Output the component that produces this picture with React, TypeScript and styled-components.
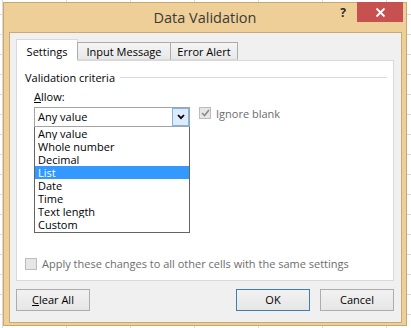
import React from 'react';
import styled, { createGlobalStyle } from 'styled-components';

const Global = createGlobalStyle`
  html, body { margin: 0; padding: 0; }
  body {
    width: 411px;
    height: 328px;
    overflow: hidden;
    background-color: #ffffff;
    background-image:
      linear-gradient(#dadada 1px, transparent 1px),
      linear-gradient(90deg, #dadada 1px, transparent 1px);
    background-size: 64px 20px;
    background-position: 0 14px, 2px 0;
    font-family: "Open Sans", "Noto Sans", sans-serif;
    font-size: 11px;
    color: #000;
  }
  #root { display: flex; }
`;

const Window = styled.div`
  box-sizing: border-box;
  margin: 2px 0 0 3px;
  width: 404px;
  height: 324px;
  background: #efcf98;
  border: 1px solid #c9a86f;
  display: flex;
  flex-direction: column;
`;

const TitleBar = styled.div`
  height: 29px;
  display: grid;
  grid-template-columns: 1fr auto 1fr;
  align-items: start;
`;

const Title = styled.div`
  grid-column: 2;
  font-size: 14.5px;
  line-height: 29px;
  color: #3a3a3a;
  white-space: nowrap;
`;

const Controls = styled.div`
  grid-column: 3;
  justify-self: end;
  display: flex;
  margin-right: 3px;
`;

const HelpButton = styled.div`
  width: 24px;
  height: 20px;
  margin-right: 2px;
  font-weight: 700;
  font-size: 12px;
  line-height: 19px;
  text-align: center;
  color: #2b2b2b;
`;

const CloseButton = styled.div`
  width: 46px;
  height: 20px;
  margin-top: -1px;
  background: #c75050;
  display: flex;
  align-items: center;
  justify-content: center;
`;

const Client = styled.div`
  box-sizing: border-box;
  flex: 1;
  margin: 0 4px 2px 5px;
  border: 1px solid #c7aa78;
  background: #f0f0f0;
  padding: 6px 7px 0 6px;
  display: flex;
  flex-direction: column;
`;

const TabStrip = styled.div`
  display: flex;
  align-items: flex-start;
  height: 22px;
  margin-bottom: -1px;
  position: relative;
  z-index: 1;
`;

const Tab = styled.div<{ $active?: boolean; $w: number }>`
  box-sizing: border-box;
  width: ${p => p.$w}px;
  height: ${p => (p.$active ? 22 : 18)}px;
  margin-top: ${p => (p.$active ? 0 : 3)}px;
  margin-left: ${p => (p.$active ? 0 : -1)}px;
  border: 1px solid ${p => (p.$active ? '#d9d9d9' : '#acacac')};
  border-bottom: ${p => (p.$active ? 'none' : '1px solid #d9d9d9')};
  background: ${p => (p.$active ? '#ffffff' : 'linear-gradient(#f5f5f5, #e8e8e8)')};
  text-align: center;
  line-height: ${p => (p.$active ? 24 : 18)}px;
  white-space: nowrap;
  &:first-child { margin-left: 0; }
`;

const Panel = styled.div`
  box-sizing: border-box;
  height: 221px;
  border: 1px solid #d9d9d9;
  background: #ffffff;
  position: relative;
  padding: 8px 0 0 8px;
  display: flex;
  flex-direction: column;
`;

const GroupHeader = styled.div`
  display: flex;
  align-items: center;
  height: 16px;
  padding-right: 6px;
  gap: 5px;
`;

const GroupRule = styled.div`
  flex: 1;
  height: 1px;
  background: #dcdcdc;
  margin-top: 1px;
`;

const Criteria = styled.div`
  display: flex;
  flex-direction: column;
  padding-left: 9px;
  margin-top: 4px;
`;

const FieldLabel = styled.div`
  height: 16px;
  line-height: 16px;
`;

const U = styled.span`
  text-decoration: underline;
  text-underline-offset: 1px;
`;

const FieldRow = styled.div`
  display: flex;
  align-items: flex-start;
  margin-top: 2px;
  gap: 9px;
`;

const ComboWrap = styled.div`
  position: relative;
  width: 156px;
`;

const Combo = styled.div`
  box-sizing: border-box;
  height: 20px;
  border: 1px solid #a3a3a3;
  display: flex;
  align-items: center;
  padding-left: 3px;
  background: #fff;
`;

const ComboText = styled.div`
  flex: 1;
  line-height: 18px;
`;

const ComboArrow = styled.div`
  box-sizing: border-box;
  width: 17px;
  height: 18px;
  background: #dcecfc;
  border: 1px solid #7eb4ea;
  display: flex;
  align-items: center;
  justify-content: center;
`;

const ListBox = styled.div`
  position: absolute;
  left: 0;
  top: 20px;
  box-sizing: border-box;
  width: 156px;
  border: 1px solid #646464;
  border-top: none;
  background: #fff;
  display: flex;
  flex-direction: column;
  padding-bottom: 1px;
`;

const ListItem = styled.div<{ $sel?: boolean }>`
  height: 13px;
  line-height: 13px;
  padding-left: 3px;
  overflow: hidden;
  background: ${p => (p.$sel ? '#3399ff' : 'transparent')};
  color: ${p => (p.$sel ? '#fff' : '#000')};
  white-space: nowrap;
`;

const CheckRow = styled.label<{ $disabled?: boolean }>`
  display: flex;
  align-items: center;
  gap: 5px;
  color: ${p => (p.$disabled ? '#6d6d6d' : '#000')};
  white-space: nowrap;
`;

const CheckBox = styled.div`
  box-sizing: border-box;
  width: 12px;
  height: 12px;
  border: 1px solid #bcbcbc;
  background: #e6e6e6;
  display: flex;
  align-items: center;
  justify-content: center;
`;

const IgnoreRow = styled(CheckRow)`
  margin-top: 0;
  height: 12px;
`;

const Spacer = styled.div`
  flex: 1;
`;

const ApplyRow = styled(CheckRow)`
  margin-bottom: 9px;
`;

const Footer = styled.div`
  display: flex;
  margin-top: 8px;
  gap: 10px;
`;

const Button = styled.div<{ $default?: boolean }>`
  box-sizing: border-box;
  width: 74px;
  height: 22px;
  border: 1px solid ${p => (p.$default ? '#3c7fb1' : '#adadad')};
  background: linear-gradient(#f2f2f2, #e6e6e6);
  text-align: center;
  line-height: 20px;
`;

const FooterGap = styled.div`
  flex: 1;
`;

const items = ['Any value', 'Whole number', 'Decimal', 'List', 'Date', 'Time', 'Text length', 'Custom'];

export default function App() {
  return (
    <>
      <Global />
      <Window>
        <TitleBar>
          <Title>Data Validation</Title>
          <Controls>
            <HelpButton>?</HelpButton>
            <CloseButton>
              <svg width="11" height="11" viewBox="0 0 11 11">
                <path d="M1.5 1.5 L9.5 9.5 M9.5 1.5 L1.5 9.5" stroke="#ffffff" strokeWidth="1.8" />
              </svg>
            </CloseButton>
          </Controls>
        </TitleBar>
        <Client>
          <TabStrip>
            <Tab $active $w={62}>Settings</Tab>
            <Tab $w={94}>Input Message</Tab>
            <Tab $w={68}>Error Alert</Tab>
          </TabStrip>
          <Panel>
            <GroupHeader>
              <span>Validation criteria</span>
              <GroupRule />
            </GroupHeader>
            <Criteria>
              <FieldLabel>
                <U>A</U>llow:
              </FieldLabel>
              <FieldRow>
                <ComboWrap>
                  <Combo>
                    <ComboText>Any value</ComboText>
                    <ComboArrow>
                      <svg width="8" height="6" viewBox="0 0 8 6">
                        <path d="M1 1 L4 4.2 L7 1" stroke="#000" strokeWidth="1.8" fill="none" />
                      </svg>
                    </ComboArrow>
                  </Combo>
                  <ListBox>
                    {items.map(it => (
                      <ListItem key={it} $sel={it === 'List'}>
                        {it}
                      </ListItem>
                    ))}
                  </ListBox>
                </ComboWrap>
                <IgnoreRow $disabled>
                  <CheckBox>
                    <svg width="9" height="8" viewBox="0 0 9 8">
                      <path d="M1 4 L3.5 6.5 L8 1" stroke="#8a8a8a" strokeWidth="1.6" fill="none" />
                    </svg>
                  </CheckBox>
                  Ignore blank
                </IgnoreRow>
              </FieldRow>
            </Criteria>
            <Spacer />
            <ApplyRow $disabled>
              <CheckBox />
              Apply these changes to all other cells with the same settings
            </ApplyRow>
          </Panel>
          <Footer>
            <Button>
              <U>C</U>lear All
            </Button>
            <FooterGap />
            <Button $default>OK</Button>
            <Button>Cancel</Button>
          </Footer>
        </Client>
      </Window>
    </>
  );
}
